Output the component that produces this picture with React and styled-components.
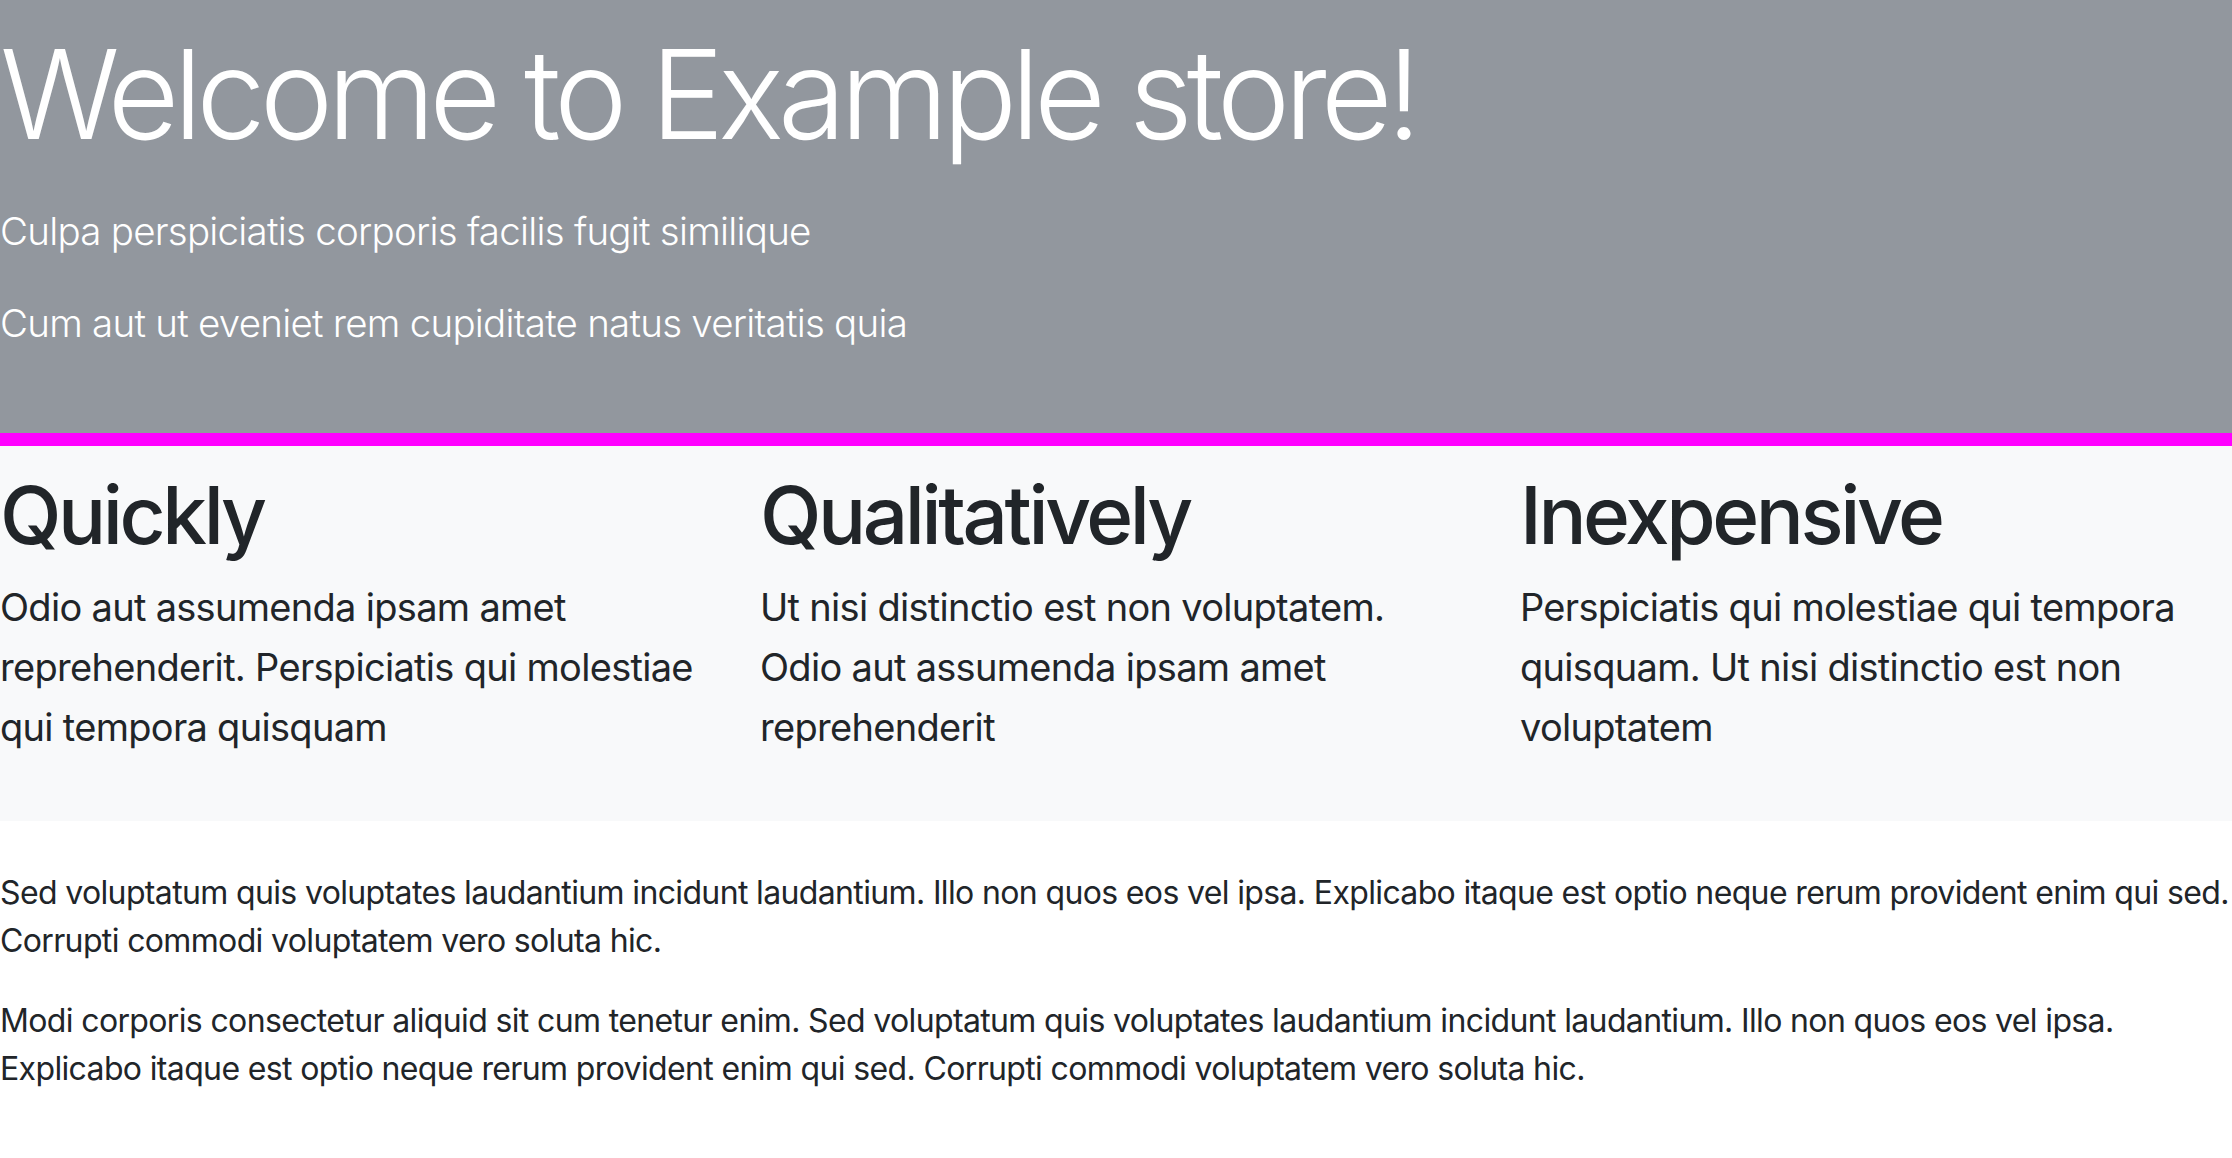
import React from 'react'
import styled, { createGlobalStyle } from 'styled-components'

const GlobalStyle = createGlobalStyle`
    * {
        box-sizing: border-box;
    }
    body {
        margin: 0;
        font-family: Inter, "Liberation Sans", sans-serif;
        font-size: 32px;
        line-height: 1.5;
        letter-spacing: -0.02em;
        color: #212529;
        background: #fff;
    }
`

const Hero = styled.header`
    background-color: #92979e;
    color: #fff;
    padding: 20px 0 48px;
    border-bottom: 13px solid #ff00ff;
`

const Title = styled.h1`
    margin: 0 0 32px;
    font-size: 124px;
    font-weight: 300;
    line-height: 1.2;
    letter-spacing: -6px;
`

const Lead = styled.p`
    margin: 0 0 32px;
    font-size: 38.5px;
    font-weight: 300;
    line-height: 60px;
    letter-spacing: -0.75px;
`

const Features = styled.section`
    background-color: #f8f9fa;
    padding: 21px 0 32px;
`

const Row = styled.div`
    display: grid;
    grid-template-columns: repeat(3, 1fr);
    column-gap: 48px;
`

const Feature = styled.div`
    display: flex;
    flex-direction: column;
`

const FeatureTitle = styled.h2`
    margin: 0 0 14px;
    font-size: 80px;
    font-weight: 500;
    line-height: 1.2;
    letter-spacing: -3.4px;
`

const FeatureText = styled.p`
    margin: 0 0 32px;
    font-size: 38px;
    font-weight: 400;
    line-height: 60px;
    letter-spacing: -0.7px;
`

const Content = styled.section`
    padding: 48px 0 32px;
`

const Paragraph = styled.p`
    margin: 0 0 32px;
`

const features = [
    {
        title: 'Quickly',
        text: 'Odio aut assumenda ipsam amet reprehenderit. Perspiciatis qui molestiae qui tempora quisquam',
    },
    {
        title: 'Qualitatively',
        text: 'Ut nisi distinctio est non voluptatem. Odio aut assumenda ipsam amet reprehenderit',
    },
    {
        title: 'Inexpensive',
        text: 'Perspiciatis qui molestiae qui tempora quisquam. Ut nisi distinctio est non voluptatem',
    },
]

const App = () => {
    return (
        <>
            <GlobalStyle />
            <Hero>
                <Title>Welcome to Example store!</Title>
                <Lead>Culpa perspiciatis corporis facilis fugit similique</Lead>
                <Lead>Cum aut ut eveniet rem cupiditate natus veritatis quia</Lead>
            </Hero>
            <Features>
                <Row>
                    {features.map((f) => (
                        <Feature key={f.title}>
                            <FeatureTitle>{f.title}</FeatureTitle>
                            <FeatureText>{f.text}</FeatureText>
                        </Feature>
                    ))}
                </Row>
            </Features>
            <Content>
                <Paragraph>
                    Sed voluptatum quis voluptates laudantium incidunt laudantium. Illo non quos eos vel ipsa. Explicabo itaque est optio neque rerum provident enim qui sed. Corrupti commodi voluptatem vero soluta hic.
                </Paragraph>
                <Paragraph>
                    Modi corporis consectetur aliquid sit cum tenetur enim. Sed voluptatum quis voluptates laudantium incidunt laudantium. Illo non quos eos vel ipsa. Explicabo itaque est optio neque rerum provident enim qui sed. Corrupti commodi voluptatem vero soluta hic.
                </Paragraph>
            </Content>
        </>
    )
}

export default App
